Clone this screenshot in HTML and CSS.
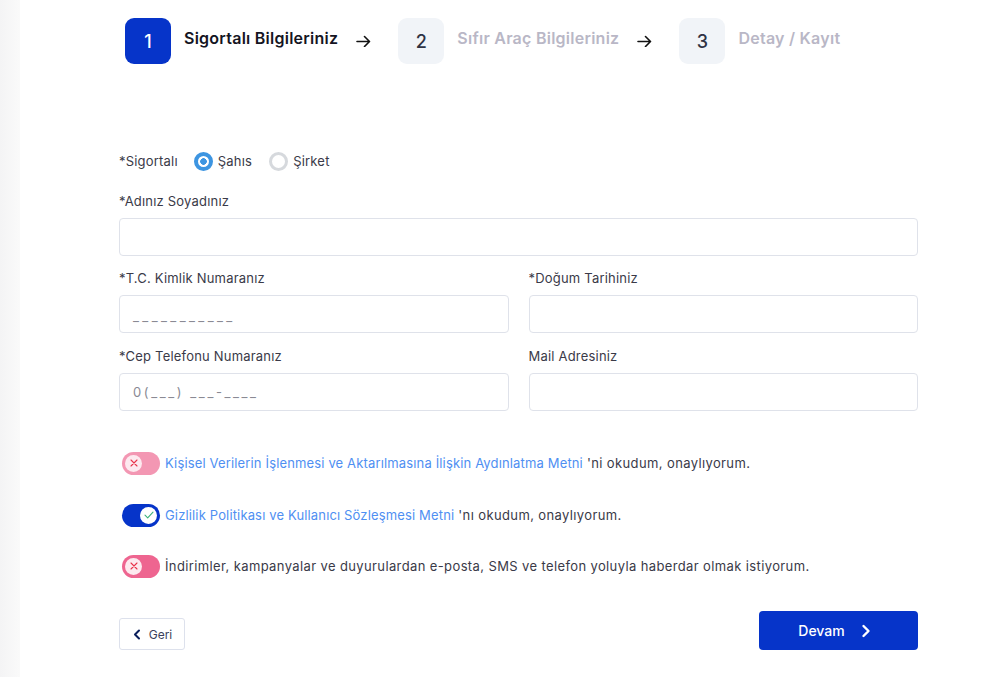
FILE: index.html
```html
<!DOCTYPE html>
<html lang="tr">
<head>
<meta charset="utf-8">
<title>Sigortalı Bilgileriniz</title>
<link rel="stylesheet" href="styles.css">
</head>
<body>
<div class="page">
  <div class="side"></div>
  <main class="main">
    <div class="stepper">
      <div class="step active">
        <div class="step-num">1</div>
        <div class="step-title">Sigortalı Bilgileriniz</div>
      </div>
      <svg class="arrow" width="15" height="12" viewBox="0 0 15 12"><path d="M1 6.5h12M8.5 1.5l5 5-5 5" fill="none" stroke="#111" stroke-width="1.6" stroke-linecap="round" stroke-linejoin="round"/></svg>
      <div class="step">
        <div class="step-num">2</div>
        <div class="step-title">Sıfır Araç Bilgileriniz</div>
      </div>
      <svg class="arrow" width="15" height="12" viewBox="0 0 15 12"><path d="M1 6.5h12M8.5 1.5l5 5-5 5" fill="none" stroke="#111" stroke-width="1.6" stroke-linecap="round" stroke-linejoin="round"/></svg>
      <div class="step">
        <div class="step-num">3</div>
        <div class="step-title">Detay / Kayıt</div>
      </div>
    </div>

    <form class="form">
      <div class="radio-row">
        <span class="label-inline">*Sigortalı</span>
        <label class="radio"><span class="radio-dot checked"></span>Şahıs</label>
        <label class="radio"><span class="radio-dot"></span>Şirket</label>
      </div>

      <div class="field full">
        <div class="label">*Adınız Soyadınız</div>
        <div class="input"></div>
      </div>

      <div class="grid">
        <div class="field">
          <div class="label">*T.C. Kimlik Numaranız</div>
          <div class="input"><span class="mask mask-tc">___________</span></div>
        </div>
        <div class="field">
          <div class="label">*Doğum Tarihiniz</div>
          <div class="input"></div>
        </div>
        <div class="field">
          <div class="label">*Cep Telefonu Numaranız</div>
          <div class="input"><span class="mask mask-phone">0(___) ___-____</span></div>
        </div>
        <div class="field">
          <div class="label">Mail Adresiniz</div>
          <div class="input"></div>
        </div>
      </div>

      <div class="consents">
        <div class="consent">
          <span class="toggle off light"><span class="knob"><svg width="8" height="8" viewBox="0 0 8 8"><path d="M1 1l6 6M7 1L1 7" stroke="#e8334a" stroke-width="1.1" stroke-linecap="round"/></svg></span></span>
          <span class="consent-text"><a class="link">Kişisel Verilerin İşlenmesi ve Aktarılmasına İlişkin Aydınlatma Metni</a> 'ni okudum, onaylıyorum.</span>
        </div>
        <div class="consent">
          <span class="toggle on"><span class="knob"><svg width="10" height="8" viewBox="0 0 10 8"><path d="M1 4.2l2.7 2.6L9 1.2" fill="none" stroke="#3bb27a" stroke-width="1.1" stroke-linecap="round" stroke-linejoin="round"/></svg></span></span>
          <span class="consent-text"><a class="link">Gizlilik Politikası ve Kullanıcı Sözleşmesi Metni</a> 'nı okudum, onaylıyorum.</span>
        </div>
        <div class="consent">
          <span class="toggle off"><span class="knob"><svg width="8" height="8" viewBox="0 0 8 8"><path d="M1 1l6 6M7 1L1 7" stroke="#e8334a" stroke-width="1.1" stroke-linecap="round"/></svg></span></span>
          <span class="consent-text">İndirimler, kampanyalar ve duyurulardan e-posta, SMS ve telefon yoluyla haberdar olmak istiyorum.</span>
        </div>
      </div>

      <div class="actions">
        <button type="button" class="btn-back"><svg width="8" height="11" viewBox="0 0 8 11"><path d="M6 1.5L2 5.5l4 4" fill="none" stroke="#0a1f5c" stroke-width="2" stroke-linecap="round" stroke-linejoin="round"/></svg>Geri</button>
        <button type="button" class="btn-next">Devam<svg width="10" height="14" viewBox="0 0 10 14"><path d="M2.5 2l5 5-5 5" fill="none" stroke="#fff" stroke-width="2.4" stroke-linecap="round" stroke-linejoin="round"/></svg></button>
      </div>
    </form>
  </main>
</div>
</body>
</html>
```

FILE: styles.css
```css
* { box-sizing: border-box; }
html, body { margin: 0; padding: 0; background: #fff; }
body {
  font-family: "Inter", "Open Sans", "DejaVu Sans", sans-serif;
  color: #3a3a48;
  width: 993px;
  height: 677px;
  overflow: hidden;
}
.page { display: flex; height: 677px; }
.side {
  width: 20px;
  flex: none;
  background: linear-gradient(to right, #f4f4f5, #fafafa);
}
.main {
  flex: 1;
  padding-left: 99px;
  padding-right: 75px;
}

/* stepper */
.stepper {
  display: flex;
  align-items: center;
  padding-top: 18px;
  padding-left: 6px;
}
.step { display: flex; align-items: center; }
.step-num {
  width: 46px;
  height: 46px;
  border-radius: 9px;
  background: #f1f4f8;
  color: #2f3344;
  font-size: 18px;
  font-weight: 500;
  display: flex;
  align-items: center;
  justify-content: center;
}
.step.active .step-num { background: #0634c9; color: #fff; }
.step-title {
  margin-left: 13px;
  margin-top: -7px;
  font-size: 16px;
  font-weight: 600;
  color: #b9b7c6;
  letter-spacing: 0.25px;
}
.step.active .step-title { color: #141422; }
.arrow { margin: 0 27px 0 18px; flex: none; }

/* form */
.form { width: 799px; }
.radio-row {
  display: flex;
  align-items: center;
  height: 20px;
  margin-top: 87px;
  font-size: 13px;
  letter-spacing: 0.2px;
}
.label-inline { margin-right: 16px; }
.radio { display: flex; align-items: center; margin-right: 17px; color: #3a3a48; }
.radio-dot {
  width: 19px;
  height: 19px;
  border-radius: 50%;
  border: 3.5px solid #d6d9dd;
  margin-right: 5px;
  background: #fff;
}
.radio-dot.checked {
  border: 4px solid #3d95e1;
  background: radial-gradient(circle, #3d95e1 0 3px, #fff 3.6px);
}

.field { display: flex; flex-direction: column; }
.full { margin-top: 20px; }
.label {
  font-size: 13px;
  line-height: 20px;
  height: 20px;
  color: #3a3a48;
  letter-spacing: 0.2px;
}
.input {
  margin-top: 7px;
  height: 38px;
  border: 1px solid #dfe2ea;
  border-radius: 4px;
  background: #fff;
  display: flex;
  align-items: center;
  padding-left: 13px;
}
.mask {
  font-size: 13px;
  color: #8a8a94;
}
.mask-tc { letter-spacing: 3.4px; margin-top: 4px; }
.mask-phone { letter-spacing: 2.6px; }
.grid {
  display: grid;
  grid-template-columns: 1fr 1fr;
  column-gap: 20px;
  row-gap: 13px;
  margin-top: 12px;
}

/* consents */
.consents { margin-top: 41px; display: flex; flex-direction: column; gap: 30px; }
.consent { display: flex; align-items: center; height: 22px; padding-left: 3px; }
.consent:nth-child(3) { margin-top: -1px; }
.toggle {
  width: 38px;
  height: 23px;
  border-radius: 12px;
  flex: none;
  display: flex;
  align-items: center;
  padding: 0 3px;
  margin-right: 5px;
}
.toggle.off { background: #ee6590; }
.toggle.off.light { background: #f397b3; }
.toggle.on { background: #0634c9; justify-content: flex-end; }
.knob {
  width: 17px;
  height: 17px;
  border-radius: 50%;
  display: flex;
  align-items: center;
  justify-content: center;
}
.toggle.off .knob { background: #fde9ef; }
.toggle.on .knob { background: #fff; }
.consent-text { font-size: 13px; color: #3a3a48; letter-spacing: 0.38px; }
.link { color: #4f8ff2; text-decoration: none; letter-spacing: 0.15px; }

/* actions */
.actions {
  display: flex;
  justify-content: space-between;
  align-items: flex-end;
  margin-top: 34px;
}
.btn-back {
  width: 66px;
  height: 32px;
  border: 1px solid #dde1ec;
  border-radius: 3px;
  background: #fff;
  font-family: inherit;
  font-size: 12px;
  color: #3a3f5c;
  display: flex;
  align-items: center;
  justify-content: center;
  gap: 8px;
  padding: 0 0 0 1px;
}
.btn-next {
  width: 159px;
  height: 39px;
  border: none;
  border-radius: 4px;
  background: #0634c9;
  color: #fff;
  font-family: inherit;
  font-size: 14px;
  font-weight: 500;
  display: flex;
  align-items: center;
  justify-content: center;
  gap: 16px;
  padding: 0 8px 0 0;
}
```
